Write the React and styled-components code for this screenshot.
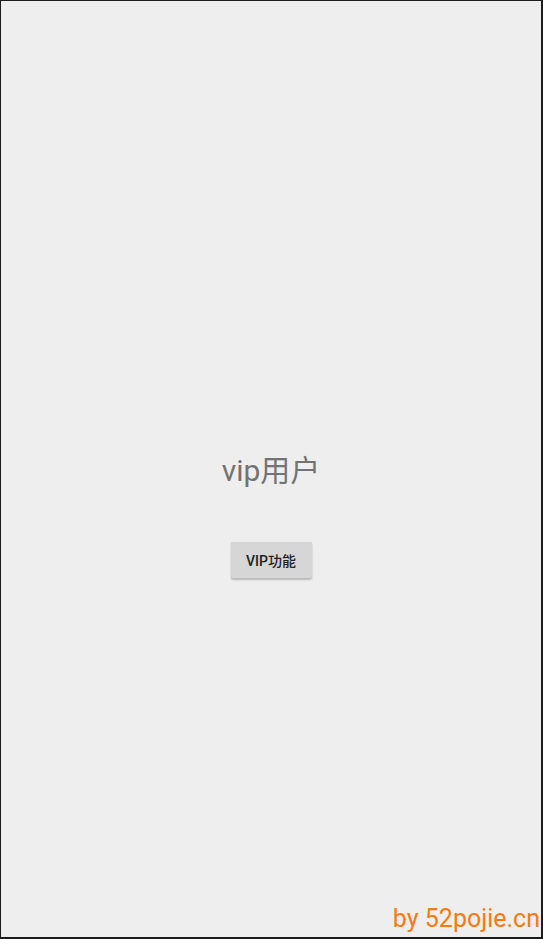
import React from 'react';
import styled, { createGlobalStyle } from 'styled-components';

const GlobalStyle = createGlobalStyle`
  html, body {
    margin: 0;
    padding: 0;
    background: #ffffff;
  }
  * {
    box-sizing: border-box;
  }
`;

const Screen = styled.div`
  position: relative;
  width: 543px;
  height: 939px;
  background: #eeeeee;
  border-top: 1px solid #1c1c1c;
  border-left: 1px solid #1c1c1c;
  border-right: 2px solid #1c1c1c;
  border-bottom: 2px solid #1c1c1c;
  display: grid;
  grid-template-rows: 1fr auto 1fr;
  justify-items: center;
  font-family: Roboto, "Noto Sans CJK SC", sans-serif;
`;

const Title = styled.div`
  grid-row: 2;
  font-size: 30px;
  line-height: 36px;
  padding-top: 3px;
  color: #737373;
`;

const Lower = styled.div`
  grid-row: 3;
  padding-top: 53px;
`;

const VipButton = styled.button`
  width: 81px;
  height: 36px;
  border: none;
  border-radius: 2px;
  background: #d6d6d6;
  box-shadow: 0 2px 2px rgba(0, 0, 0, 0.22), 0 0 1px rgba(0, 0, 0, 0.12);
  font-family: Roboto, "Noto Sans CJK SC", sans-serif;
  font-size: 14px;
  font-weight: 500;
  color: #212121;
  cursor: pointer;
  padding: 0;
`;

const Watermark = styled.div`
  position: absolute;
  right: 1px;
  bottom: 3px;
  font-family: Roboto, sans-serif;
  font-size: 25px;
  line-height: 30px;
  color: #f47a12;
`;

const App = () => {
  return (
    <>
      <GlobalStyle />
      <Screen>
        <Title>vip用户</Title>
        <Lower>
          <VipButton>VIP功能</VipButton>
        </Lower>
        <Watermark>by 52pojie.cn</Watermark>
      </Screen>
    </>
  );
};

export default App;
